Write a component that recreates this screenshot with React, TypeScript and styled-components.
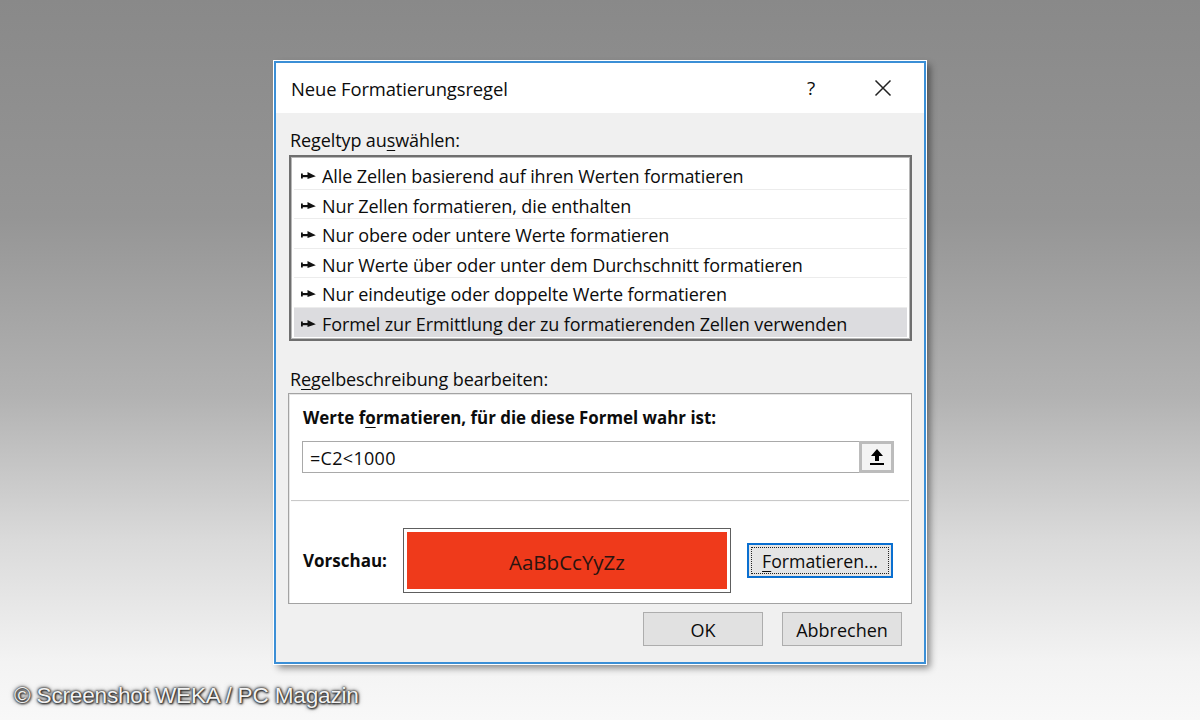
import React from "react";
import styled, { createGlobalStyle } from "styled-components";

const Global = createGlobalStyle`
  html, body { margin: 0; padding: 0; }
  body { width: 1200px; height: 720px; overflow: hidden; }
  * { box-sizing: border-box; }
`;

const FONT = `"Open Sans", "Noto Sans", "DejaVu Sans", sans-serif`;

const Stage = styled.div`
  position: relative;
  width: 1200px;
  height: 720px;
  background: linear-gradient(180deg, #898989 0%, #959595 30%, #b2b2b2 55%, #dadada 75%, #f3f3f3 92%, #f8f8f8 100%);
  padding: 61px 0 0 274px;
  font-family: ${FONT};
  color: #0c0c0c;
`;

const Dialog = styled.div`
  width: 652px;
  height: 603px;
  border: 2px solid #3b8fd6;
  box-shadow: 0 0 0 1px #ffffff, 4px 4px 7px rgba(0, 0, 0, 0.45);
  background: #f0f0f0;
  display: flex;
  flex-direction: column;
`;

const TitleBar = styled.div`
  height: 50px;
  background: #ffffff;
  display: flex;
  align-items: center;
  padding-left: 15px;
  flex: none;
`;

const Title = styled.div`
  font-size: 18.4px;
  flex: 1;
  letter-spacing: -0.1px;
`;

const TitleButton = styled.div<{ $w: number }>`
  width: ${(p) => p.$w}px;
  height: 50px;
  display: flex;
  align-items: center;
  justify-content: center;
  font-size: 19px;
`;

const Body = styled.div`
  flex: 1;
  display: flex;
  flex-direction: column;
  padding: 16px 12px 0 13px;
`;

const SectionLabel = styled.div<{ $mt?: number }>`
  font-size: 18px;
  height: 22px;
  line-height: 22px;
  margin-top: ${(p) => p.$mt ?? 0}px;
  padding-left: 1px;
  letter-spacing: -0.1px;
  u { text-decoration-thickness: 1px; text-underline-offset: 3px; }
`;

const ListBox = styled.div`
  margin-top: 4px;
  width: 623px;
  height: 186px;
  border: 2px solid #6f6f6f;
  box-shadow: inset 0 0 0 1px #b8b8b8;
  background: #ffffff;
  padding: 3px 3px 0 3px;
  display: flex;
  flex-direction: column;
`;

const Row = styled.div<{ $selected?: boolean }>`
  height: 29.5px;
  flex: none;
  display: flex;
  align-items: center;
  padding-left: 7px;
  gap: 6px;
  font-size: 18px;
  letter-spacing: -0.1px;
  white-space: nowrap;
  background: ${(p) => (p.$selected ? "#dcdcdf" : "transparent")};
  border-bottom: 1px solid ${(p) => (p.$selected ? "transparent" : "#ececec")};
  padding-top: 4px;
`;

const GroupBox = styled.div`
  margin-top: 3px;
  width: 624px;
  height: 211px;
  margin-left: -1px;
  border: 1px solid #a3a3a3;
  box-shadow: inset 1px 1px 0 #e6e6e6;
  background: #ffffff;
  display: flex;
  flex-direction: column;
  padding: 13px 17px 0 13px;
`;

const BoldLabel = styled.div`
  font-size: 16.9px;
  font-weight: 700;
  height: 22px;
  line-height: 22px;
  padding-left: 1px;
  u { text-decoration-thickness: 1px; text-underline-offset: 3px; }
`;

const InputWrap = styled.div`
  margin-top: 12px;
  height: 32px;
  display: flex;
  border: 1px solid #a9a9a9;
  background: #fff;
`;

const InputText = styled.div`
  flex: 1;
  font-size: 18px;
  display: flex;
  align-items: center;
  padding-left: 7px;
  padding-top: 1px;
  letter-spacing: 0.3px;
`;

const RefButton = styled.div`
  width: 35px;
  margin: -1px -1px -1px 0;
  border: 3px solid #bcbcbc;
  background: #f4f4f4;
  display: flex;
  align-items: center;
  justify-content: center;
`;

const Separator = styled.div`
  margin: 27px -15px 0 -11px;
  height: 2px;
  border-top: 1px solid #c9c9c9;
  border-bottom: 1px solid #fafafa;
`;

const PreviewRow = styled.div`
  margin-top: 26px;
  display: flex;
  align-items: center;
`;

const PreviewLabel = styled.div`
  width: 101px;
  font-size: 17px;
  font-weight: 700;
  padding-left: 1px;
`;

const PreviewFrame = styled.div`
  width: 328px;
  height: 65px;
  border: 1px solid #5e5e5e;
  background: #fff;
  padding: 3px;
`;

const PreviewFill = styled.div`
  width: 100%;
  height: 100%;
  background: #ef3a1b;
  color: #2a1410;
  font-size: 20.5px;
  display: flex;
  align-items: center;
  justify-content: center;
  padding-top: 2px;
`;

const FormatButton = styled.div`
  margin-left: 16px;
  width: 146px;
  height: 35px;
  border: 2px solid #0a6fd0;
  background: #e5e5e5;
  padding: 2px;
  display: flex;
`;

const FocusRect = styled.div`
  flex: 1;
  border: 1px dotted #222;
  display: flex;
  align-items: center;
  justify-content: center;
  font-size: 17.7px;
  white-space: nowrap;
  padding-top: 1px;
  u { text-decoration-thickness: 1px; text-underline-offset: 3px; }
`;

const Footer = styled.div`
  margin-top: 8px;
  display: flex;
  justify-content: flex-end;
  gap: 19px;
  padding-right: 10px;
`;

const Button = styled.div`
  width: 120px;
  height: 34px;
  border: 1px solid #adadad;
  background: #e1e1e1;
  display: flex;
  align-items: center;
  justify-content: center;
  font-size: 18px;
  padding-top: 1px;
`;

const Watermark = styled.div`
  position: absolute;
  left: 14px;
  top: 683px;
  font-family: "Liberation Sans", Arial, sans-serif;
  font-size: 22.6px;
  color: #f2f2f2;
  letter-spacing: -0.2px;
  text-shadow: 0 0 2px #222, 0 0 3px #333, 0 0 5px #555, 1px 1px 2px #222;
`;

const Arrow = () => (
  <svg width="15" height="10" viewBox="0 0 15 10" style={{ flex: "none" }}>
    <rect x="0" y="2.5" width="1.8" height="5" fill="#111" />
    <rect x="0" y="4" width="8" height="2.2" fill="#111" />
    <path d="M6.5 1 L14.8 5.2 L6.5 8 Z" fill="#111" />
  </svg>
);

const CloseIcon = () => (
  <svg width="18" height="18" viewBox="0 0 18 18">
    <path d="M1.5 1.5 L16.5 16.5 M16.5 1.5 L1.5 16.5" stroke="#222" strokeWidth="1.5" fill="none" />
  </svg>
);

const UpIcon = () => (
  <svg width="16" height="18" viewBox="0 0 16 18">
    <path d="M8 1 L14 8 L10 8 L10 13 L6 13 L6 8 L2 8 Z" fill="#000" />
    <rect x="1" y="15" width="14" height="2" fill="#000" />
  </svg>
);

const rules = [
  "Alle Zellen basierend auf ihren Werten formatieren",
  "Nur Zellen formatieren, die enthalten",
  "Nur obere oder untere Werte formatieren",
  "Nur Werte über oder unter dem Durchschnitt formatieren",
  "Nur eindeutige oder doppelte Werte formatieren",
  "Formel zur Ermittlung der zu formatierenden Zellen verwenden",
];

export default function App() {
  return (
    <>
      <Global />
      <Stage>
        <Dialog>
          <TitleBar>
            <Title>Neue Formatierungsregel</Title>
            <TitleButton $w={62}>?</TitleButton>
            <TitleButton $w={82}>
              <CloseIcon />
            </TitleButton>
          </TitleBar>
          <Body>
            <SectionLabel>
              Regeltyp au<u>s</u>wählen:
            </SectionLabel>
            <ListBox>
              {rules.map((r, i) => (
                <Row key={r} $selected={i === rules.length - 1}>
                  <Arrow />
                  <span>{r}</span>
                </Row>
              ))}
            </ListBox>
            <SectionLabel $mt={27}>
              R<u>e</u>gelbeschreibung bearbeiten:
            </SectionLabel>
            <GroupBox>
              <BoldLabel>
                Werte f<u>o</u>rmatieren, für die diese Formel wahr ist:
              </BoldLabel>
              <InputWrap>
                <InputText>=C2&lt;1000</InputText>
                <RefButton>
                  <UpIcon />
                </RefButton>
              </InputWrap>
              <Separator />
              <PreviewRow>
                <PreviewLabel>Vorschau:</PreviewLabel>
                <PreviewFrame>
                  <PreviewFill>AaBbCcYyZz</PreviewFill>
                </PreviewFrame>
                <FormatButton>
                  <FocusRect>
                    <span>
                      <u>F</u>ormatieren...
                    </span>
                  </FocusRect>
                </FormatButton>
              </PreviewRow>
            </GroupBox>
            <Footer>
              <Button>OK</Button>
              <Button>Abbrechen</Button>
            </Footer>
          </Body>
        </Dialog>
        <Watermark>© Screenshot WEKA / PC Magazin</Watermark>
      </Stage>
    </>
  );
}
